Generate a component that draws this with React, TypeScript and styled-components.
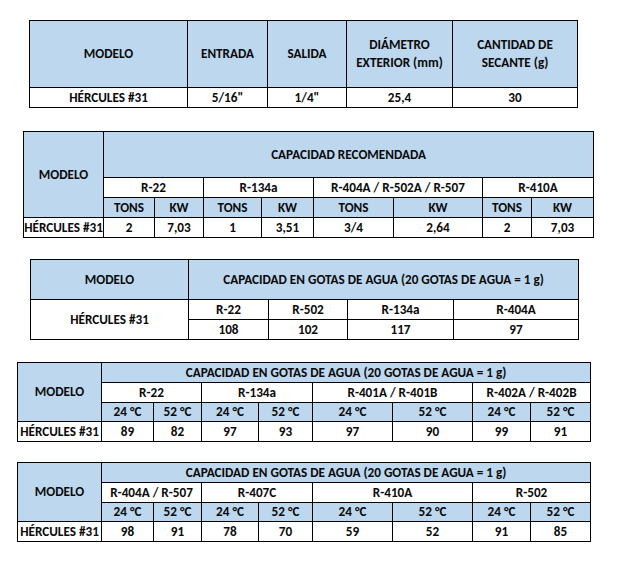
import React from 'react'
import styled, { createGlobalStyle } from 'styled-components'

const GlobalStyle = createGlobalStyle`
  html, body {
    margin: 0;
    padding: 0;
    background: #ffffff;
  }
  body {
    font-family: Carlito, "Liberation Sans Narrow", "DejaVu Sans Condensed", sans-serif;
  }
`

// ============== LAYOUT ==============
const Page = styled.div`
  width: 628px;
  min-height: 572px;
  display: flex;
  flex-direction: column;
  align-items: flex-start;
`

const Sheet = styled.table<{ $left: number; $top: number; $width: number }>`
  margin-left: ${(p) => p.$left}px;
  margin-top: ${(p) => p.$top}px;
  width: ${(p) => p.$width}px;
  border-collapse: collapse;
  table-layout: fixed;
  border: 1px solid #000;
`

const Col = styled.col<{ $w: number }>`
  width: ${(p) => p.$w}px;
`

const Row = styled.tr<{ $h: number }>`
  height: ${(p) => p.$h}px;
`

const Cell = styled.td<{ $blue?: boolean; $tall?: boolean }>`
  border: 1px solid #000;
  background: ${(p) => (p.$blue ? '#bdd7ee' : '#ffffff')};
  padding: 0;
  text-align: center;
  vertical-align: middle;
  font-weight: 700;
  font-size: 13.2px;
  line-height: ${(p) => (p.$tall ? '18px' : '14px')};
  color: #0a0a0a;
  white-space: nowrap;
  overflow: hidden;
`

const MODEL = 'HÉRCULES #31'
const GOTAS = 'CAPACIDAD EN GOTAS DE AGUA (20 GOTAS DE AGUA = 1 g)'

// columnas compartidas por las dos últimas tablas
const tempCols = [84, 52, 48, 57, 54, 80, 80, 58, 60]

interface TempTableProps {
  top: number
  gases: string[]
  values: string[]
}

const TempTable: React.FC<TempTableProps> = ({ top, gases, values }) => (
  <Sheet $left={17} $top={top} $width={573}>
    <colgroup>
      {tempCols.map((w, i) => (
        <Col key={i} $w={w} />
      ))}
    </colgroup>
    <tbody>
      <Row $h={20}>
        <Cell $blue rowSpan={3}>
          MODELO
        </Cell>
        <Cell $blue colSpan={8}>
          {GOTAS}
        </Cell>
      </Row>
      <Row $h={20}>
        {gases.map((g) => (
          <Cell key={g} colSpan={2}>
            {g}
          </Cell>
        ))}
      </Row>
      <Row $h={19}>
        {gases.map((g) => (
          <React.Fragment key={g}>
            <Cell $blue>24 °C</Cell>
            <Cell $blue>52 °C</Cell>
          </React.Fragment>
        ))}
      </Row>
      <Row $h={20}>
        <Cell>{MODEL}</Cell>
        {values.map((v, i) => (
          <Cell key={i}>{v}</Cell>
        ))}
      </Row>
    </tbody>
  </Sheet>
)

const App: React.FC = () => {
  const recGases = ['R-22', 'R-134a', 'R-404A / R-502A / R-507', 'R-410A']
  const recValues = ['2', '7,03', '1', '3,51', '3/4', '2,64', '2', '7,03']

  return (
    <>
      <GlobalStyle />
      <Page>
        {/* Dimensiones */}
        <Sheet $left={29} $top={20} $width={548}>
          <colgroup>
            <Col $w={158} />
            <Col $w={80} />
            <Col $w={79} />
            <Col $w={106} />
            <Col $w={125} />
          </colgroup>
          <tbody>
            <Row $h={67}>
              <Cell $blue $tall>MODELO</Cell>
              <Cell $blue $tall>ENTRADA</Cell>
              <Cell $blue $tall>SALIDA</Cell>
              <Cell $blue $tall>
                DIÁMETRO
                <br />
                EXTERIOR (mm)
              </Cell>
              <Cell $blue $tall>
                CANTIDAD DE
                <br />
                SECANTE (g)
              </Cell>
            </Row>
            <Row $h={20}>
              <Cell>{MODEL}</Cell>
              <Cell>5/16"</Cell>
              <Cell>1/4"</Cell>
              <Cell>25,4</Cell>
              <Cell>30</Cell>
            </Row>
          </tbody>
        </Sheet>

        {/* Capacidad recomendada */}
        <Sheet $left={23} $top={23} $width={570}>
          <colgroup>
            {[80, 51, 49, 58, 52, 80, 89, 49, 62].map((w, i) => (
              <Col key={i} $w={w} />
            ))}
          </colgroup>
          <tbody>
            <Row $h={46}>
              <Cell $blue rowSpan={3}>
                MODELO
              </Cell>
              <Cell $blue colSpan={8}>
                CAPACIDAD RECOMENDADA
              </Cell>
            </Row>
            <Row $h={20}>
              {recGases.map((g) => (
                <Cell key={g} colSpan={2}>
                  {g}
                </Cell>
              ))}
            </Row>
            <Row $h={20}>
              {recGases.map((g) => (
                <React.Fragment key={g}>
                  <Cell $blue>TONS</Cell>
                  <Cell $blue>KW</Cell>
                </React.Fragment>
              ))}
            </Row>
            <Row $h={20}>
              <Cell>{MODEL}</Cell>
              {recValues.map((v, i) => (
                <Cell key={i}>{v}</Cell>
              ))}
            </Row>
          </tbody>
        </Sheet>

        {/* Gotas de agua */}
        <Sheet $left={30} $top={21} $width={548}>
          <colgroup>
            <Col $w={158} />
            <Col $w={80} />
            <Col $w={79} />
            <Col $w={106} />
            <Col $w={125} />
          </colgroup>
          <tbody>
            <Row $h={40}>
              <Cell $blue>MODELO</Cell>
              <Cell $blue colSpan={4}>
                {GOTAS}
              </Cell>
            </Row>
            <Row $h={20}>
              <Cell rowSpan={2}>{MODEL}</Cell>
              <Cell>R-22</Cell>
              <Cell>R-502</Cell>
              <Cell>R-134a</Cell>
              <Cell>R-404A</Cell>
            </Row>
            <Row $h={20}>
              <Cell>108</Cell>
              <Cell>102</Cell>
              <Cell>117</Cell>
              <Cell>97</Cell>
            </Row>
          </tbody>
        </Sheet>

        <TempTable
          top={22}
          gases={['R-22', 'R-134a', 'R-401A / R-401B', 'R-402A / R-402B']}
          values={['89', '82', '97', '93', '97', '90', '99', '91']}
        />

        <TempTable
          top={20}
          gases={['R-404A / R-507', 'R-407C', 'R-410A', 'R-502']}
          values={['98', '91', '78', '70', '59', '52', '91', '85']}
        />
      </Page>
    </>
  )
}

export default App
